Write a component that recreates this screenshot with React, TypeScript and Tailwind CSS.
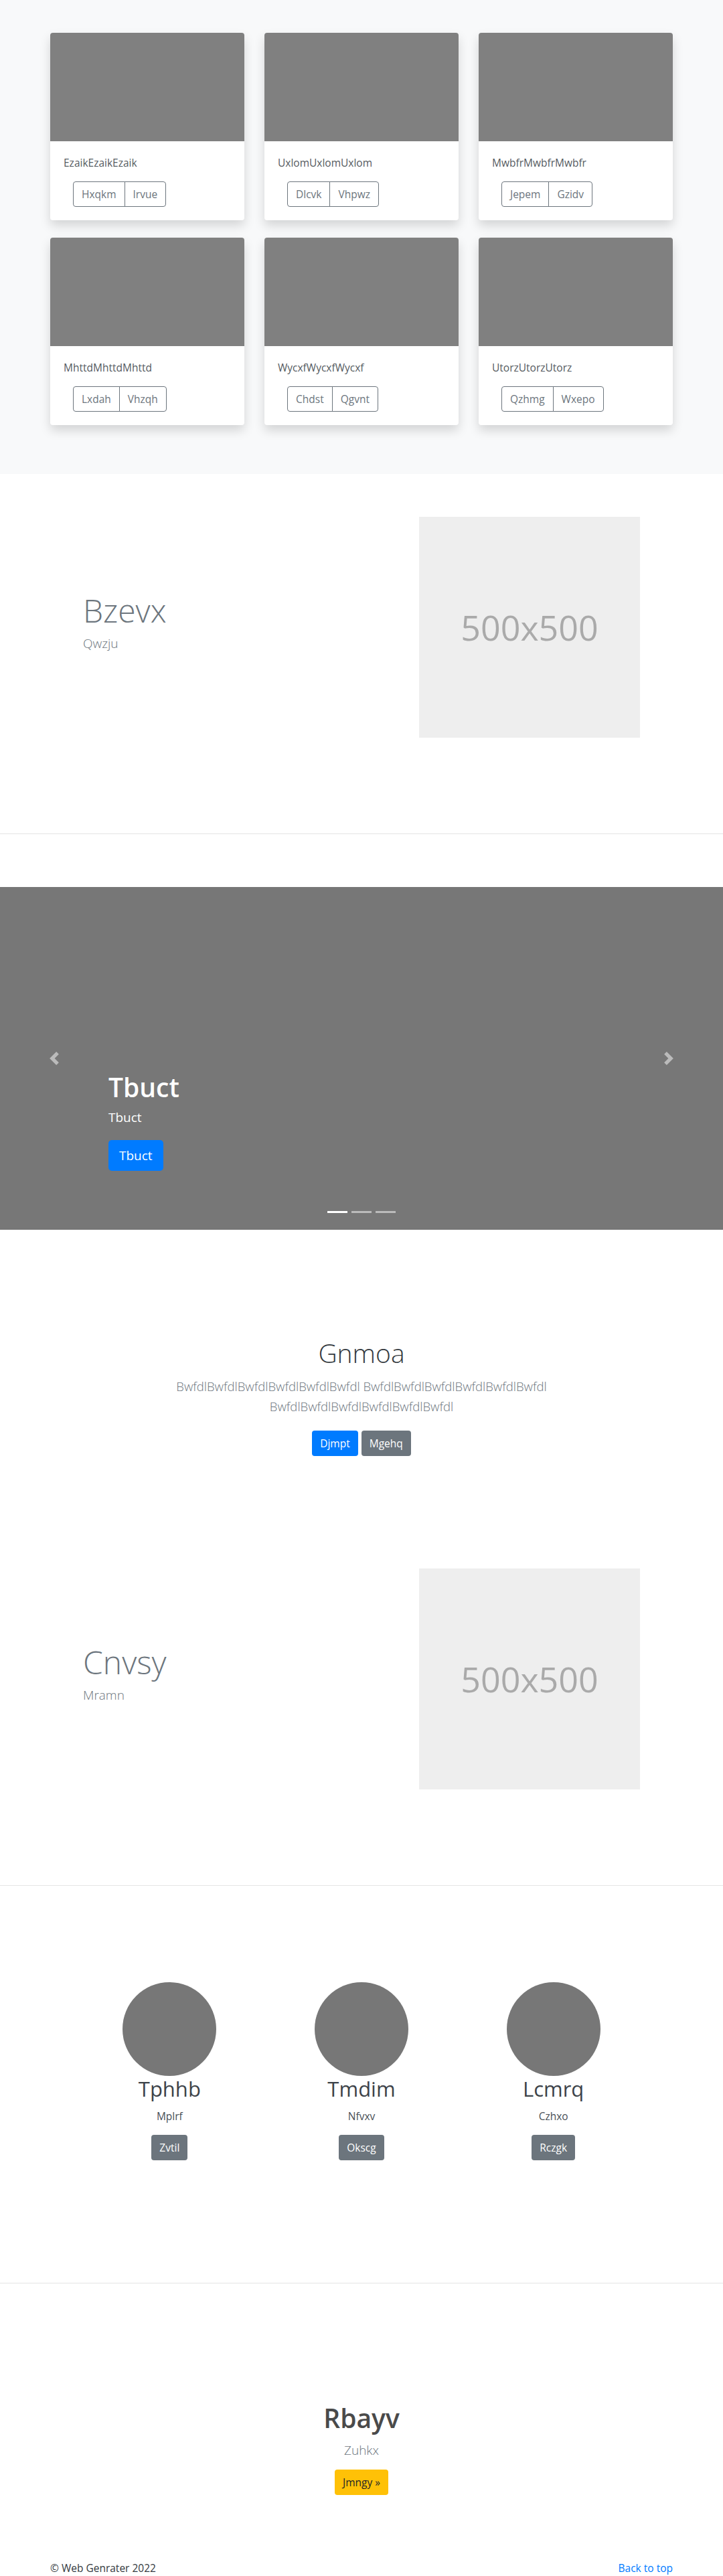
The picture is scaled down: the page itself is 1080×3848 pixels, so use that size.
const cards = [
    { title: 'EzaikEzaikEzaik', a: 'Hxqkm', b: 'Irvue' },
    { title: 'UxlomUxlomUxlom', a: 'Dlcvk', b: 'Vhpwz' },
    { title: 'MwbfrMwbfrMwbfr', a: 'Jepem', b: 'Gzidv' },
    { title: 'MhttdMhttdMhttd', a: 'Lxdah', b: 'Vhzqh' },
    { title: 'WycxfWycxfWycxf', a: 'Chdst', b: 'Qgvnt' },
    { title: 'UtorzUtorzUtorz', a: 'Qzhmg', b: 'Wxepo' },
];

const team = [
    { name: 'Tphhb', sub: 'Mplrf', btn: 'Zvtil' },
    { name: 'Tmdim', sub: 'Nfvxv', btn: 'Okscg' },
    { name: 'Lcmrq', sub: 'Czhxo', btn: 'Rczgk' },
];

function Card({ title, a, b }: { title: string, a: string, b: string }) {
    return (
        <div className="bg-white rounded shadow-[0_8px_16px_rgba(0,0,0,0.15)] h-[280px] flex flex-col">
            <div className="h-[162px] bg-[#808080] rounded-t"></div>
            <div className="px-5 pt-5 pb-5">
                <p className="text-[15.5px] leading-6 text-[#555b61] mb-4">{title}</p>
                <div className="flex ml-[14px]">
                    <button className="border border-[#6c757d] text-[#6c757d] px-3 py-[6px] text-[15.5px] leading-6 rounded-l">{a}</button>
                    <button className="border border-[#6c757d] text-[#6c757d] px-3 py-[6px] text-[15.5px] leading-6 rounded-r -ml-px">{b}</button>
                </div>
            </div>
        </div>
    );
}

function Feature({ title, sub }: { title: string, sub: string }) {
    return (
        <section className="border-b border-[#e5e5e5]">
            <div className="w-[930px] mx-auto px-[49px] pt-[64px] pb-[143px] flex items-center">
                <div className="flex-1">
                    <h2 className="text-[48px] leading-[60px] font-light text-[#6c757d]">{title}</h2>
                    <p className="text-[19px] leading-[30px] font-light text-[#6c757d] mt-1 mb-4">{sub}</p>
                </div>
                <div className="w-[330px] h-[330px] bg-[#eeeeee] flex items-center justify-center">
                    <span className="text-[52px] text-[#aaaaaa]">500x500</span>
                </div>
            </div>
        </section>
    );
}

function Carousel() {
    return (
        <div className="relative mt-[79px] h-[512px] bg-[#777777] flex flex-col justify-end pl-[162px] pb-[88px]">
            <svg className="absolute left-[71px] top-[246px] w-5 h-5" viewBox="0 0 8 8" fill="#ffffff" fillOpacity="0.5">
                <path d="M5.25 0l-4 4 4 4 1.5-1.5L4.25 4l2.5-2.5L5.25 0z" />
            </svg>
            <svg className="absolute right-[71px] top-[246px] w-5 h-5" viewBox="0 0 8 8" fill="#ffffff" fillOpacity="0.5">
                <path d="M2.75 0l-1.5 1.5L3.75 4l-2.5 2.5L2.75 8l4-4-4-4z" />
            </svg>
            <h1 className="text-[39px] leading-[48px] font-semibold text-white">Tbuct</h1>
            <p className="text-[19px] leading-[30px] text-white mt-[6px]">Tbuct</p>
            <div className="mt-[19px]">
                <button className="bg-[#007bff] text-white text-[19px] leading-[30px] px-4 py-2 rounded-[5px]">Tbuct</button>
            </div>
            <div className="absolute bottom-[25px] left-0 right-0 flex justify-center gap-[6px]">
                <span className="w-[30px] h-[3px] bg-white"></span>
                <span className="w-[30px] h-[3px] bg-white/50"></span>
                <span className="w-[30px] h-[3px] bg-white/50"></span>
            </div>
        </div>
    );
}

export default function App() {
    return (
        <div className="font-['Open_Sans',sans-serif] text-[#212529] bg-white">
            {/* album */}
            <section className="bg-[#f8f9fa] pt-[49px] pb-[73px]">
                <div className="w-[930px] mx-auto grid grid-cols-3 gap-x-[30px] gap-y-[26px]">
                    {cards.map((c) => <Card key={c.title} {...c} />)}
                </div>
            </section>

            <Feature title="Bzevx" sub="Qwzju" />

            <Carousel />

            {/* jumbotron */}
            <section className="pt-[160px] pb-[104px] text-center">
                <h1 className="text-[39px] leading-[48px] font-light text-[#343a40]">Gnmoa</h1>
                <p className="max-w-[700px] mx-auto mt-[11px] text-[18.5px] leading-[30px] font-light text-[#6c757d]">
                    BwfdlBwfdlBwfdlBwfdlBwfdlBwfdl BwfdlBwfdlBwfdlBwfdlBwfdlBwfdl BwfdlBwfdlBwfdlBwfdlBwfdlBwfdl
                </p>
                <div className="mt-[21px] flex justify-center gap-[5px]">
                    <button className="bg-[#007bff] text-white text-[15.5px] leading-6 px-3 py-[7px] rounded">Djmpt</button>
                    <button className="bg-[#6c757d] text-white text-[15.5px] leading-6 px-3 py-[7px] rounded">Mgehq</button>
                </div>
            </section>

            <Feature title="Cnvsy" sub="Mramn" />

            {/* team */}
            <section className="border-b border-[#e5e5e5] pt-[144px] pb-[183px]">
                <div className="w-[860px] mx-auto grid grid-cols-3">
                    {team.map((t) => (
                        <div key={t.name} className="flex flex-col items-center text-center">
                            <div className="w-[140px] h-[140px] rounded-full bg-[#777777]"></div>
                            <h2 className="text-[31px] leading-[38px] text-[#3d4349]">{t.name}</h2>
                            <p className="mt-[10px] text-[15.5px] leading-6 text-[#495057]">{t.sub}</p>
                            <button className="mt-4 bg-[#6c757d] text-white text-[15.5px] leading-6 px-3 py-[7px] rounded">{t.btn}</button>
                        </div>
                    ))}
                </div>
            </section>

            {/* cta */}
            <section className="pt-[177px] text-center">
                <h1 className="text-[39px] leading-[48px] font-semibold text-[#4a4a4a]">Rbayv</h1>
                <p className="mt-[9px] text-[19px] leading-[30px] font-light text-[#6c757d]">Zuhkx</p>
                <div className="mt-[14px]">
                    <button className="bg-[#ffc107] text-[#212529] text-[15.5px] leading-6 px-3 py-[7px] rounded">Jmngy »</button>
                </div>
            </section>

            <footer className="mt-[97px] pb-12">
                <div className="w-[930px] mx-auto flex justify-between text-[15.5px] leading-6">
                    <p className="text-[#343a40]">© Web Genrater 2022</p>
                    <a href="#" className="text-[#007bff]">Back to top</a>
                </div>
            </footer>
        </div>
    );
}
